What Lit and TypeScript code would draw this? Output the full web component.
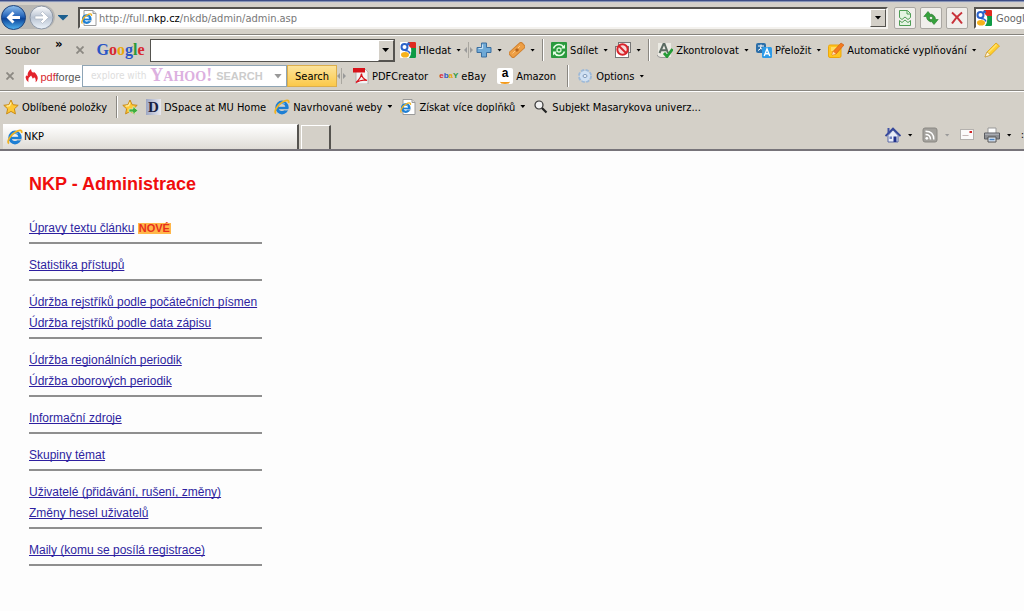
import { LitElement, html, svg, css, TemplateResult } from "lit";
import { customElement, property } from "lit/decorators.js";

const ie = svg`<ellipse cx="8" cy="8.5" rx="5" ry="5.2" fill="none" stroke="#1d7fd4" stroke-width="3.400"/>
  <path d="M4 9h10" stroke="#1d7fd4" stroke-width="2.4"/><path d="M10.5 10.8h5" stroke="#d4d0c8" stroke-width="1.2"/>
  <path d="M4.5 6.500C6 4 9 3.500 11 5" fill="none" stroke="#7cc4f5" stroke-width="1"/>
  <path d="M2 14.500C-.5 13 3 6 8.500 3 12 .8 15.500.500 14.500 4" fill="none" stroke="#f0b323" stroke-width="1.800"/>`;

const googleG = svg`<rect x="0" y="0" width="16" height="16" rx="1" fill="#fff"/>
  <path d="M8 0h7q1 0 1 1v5H11Q8 4 8 0z" fill="#e02b20"/><path d="M11 6h5v9q0 1-1 1H9q3-4 2-10z" fill="#0f9a45"/>
  <circle cx="4.500" cy="5" r="3" fill="#fff" stroke="#2b62c9" stroke-width="2"/><circle cx="8.500" cy="1.800" r="1.500" fill="#2b62c9"/>
  <ellipse cx="5" cy="12.700" rx="4" ry="2.800" fill="#f6b21b"/><path d="M5 8.500q4 0 5 3" stroke="#2b62c9" stroke-width="1.500" fill="none"/>`;

const star = svg`<path d="M8 1l2.100 4.700 5.100.6-3.800 3.500 1 5.100L8 12.400l-4.400 2.500 1-5.100L.8 6.300l5.100-.6z" fill="#ffc935" stroke="#c98a16" stroke-width="1"/>
  <path d="M8 3.500L6.600 6.700l-3 .4" fill="none" stroke="#fff0a8" stroke-width="1.200"/>`;

const icons: Record<string, TemplateResult> = {
  ie,
  iePage: svg`<path d="M3 .5h9l3 3v12H3z" fill="#fff" stroke="#9a9a9a"/><path d="M12 .5v3h3" fill="#ddd" stroke="#9a9a9a"/>
    <g transform="translate(0 3) scale(.72)">${ie}</g>`,
  googleG,
  star,
  starAdd: svg`${star}<path d="M7 10h4V7.500l5 4-5 4V13H7z" fill="#3fae3c" stroke="#d9f2cf" stroke-width=".7"/>`,
  plus: svg`<path d="M5.500 1h5v4.500H15v5h-4.500V15h-5v-4.500H1v-5h4.500z" fill="#6fa9d6" stroke="#3c6f9f"/><path d="M6.500 6.500v-4M2.500 6.500h4" stroke="#c5e2f7" stroke-width="1.200"/>`,
  patch: svg`<rect x="-.5" y="4.500" width="17" height="7" rx="2" transform="rotate(-42 8 8)" fill="#ee9f45" stroke="#cf8030"/>
    <path d="M3.500 11.500L11 4" stroke="#f9c98a"/><rect x="6.500" y="6.500" width="3" height="3" transform="rotate(-42 8 8)" fill="#b5651d"/>`,
  share: svg`<rect width="16" height="16" rx="1" fill="#2a9a3e"/><path d="M2.500 6.500q1.500-4 5.500-4 3 0 4.500 2.500M13.500 9.500q-1.500 4-5.500 4-3 0-4.500-2.500" fill="none" stroke="#e6ffe6" stroke-width="1.600"/>
    <path d="M14 2.500v4h-4zM2 13.500v-4h4z" fill="#e6ffe6"/><circle cx="8" cy="8" r="2" fill="none" stroke="#d5f7d5" stroke-width="1.300"/>`,
  block: svg`<rect x="3.500" y=".5" width="12" height="10" fill="#eee" stroke="#777"/><rect x=".5" y="4.500" width="13" height="11" fill="#fff" stroke="#777"/>
    <circle cx="7.500" cy="7.500" r="5.200" fill="#f7dada" stroke="#d8232a" stroke-width="2"/><path d="M4 4l7 7" stroke="#d8232a" stroke-width="2"/>`,
  check: svg`<path d="M1 1h13v14H3q-2 0-2-2z" fill="#ecebe4"/><path d="M0 13q1 2.500 4 2.500h7" stroke="#999" fill="none"/><path d="M2.500 11L6.500 2h1l3.500 9M4 8.200h5.500" fill="none" stroke="#5b6b62" stroke-width="2"/><path d="M7 11l3 3.500L15.500 7" fill="none" stroke="#249b36" stroke-width="2.800"/>`,
  translate: svg`<rect x="0" y="1" width="10" height="10" rx="2" fill="#2c6ea8"/><path d="M2 4h6M5 2.500v2q0 3-3 4M4 5.500L8 9" stroke="#fff" fill="none"/>
    <rect x="6" y="5" width="10" height="11" rx="1.500" fill="#2d9be8"/><path d="M8.200 14L11 7l2.800 7M9 11.800h4" fill="none" stroke="#fff" stroke-width="1.400"/>`,
  autofill: svg`<rect x=".5" y="3" width="12.500" height="12.500" rx="1.500" fill="#ffc51f" stroke="#eda60b"/><path d="M3 6h6M3 8h4" stroke="#fff1a8"/><path d="M4 13l1-3.500L13 1l3 2-8 9z" fill="#f47b20" stroke="#c9570e" stroke-width=".6"/><path d="M4 13l1-3.500L8 12z" fill="#ffe1b0"/>`,
  pencil: svg`<path d="M1 15l2-5 9-9 3.500 3L6.500 13z" fill="#ffcf2d" stroke="#dea112" stroke-width=".8"/><path d="M4 11l8.500-8.500" stroke="#ffe270" stroke-width="1.200"/><path d="M1 15l2-5 3.500 3z" fill="#fff3d6" stroke="#b98b2a" stroke-width=".5"/>`,
  flame: svg`<path d="M4 15Q-1 11 1.500 7 2 8 3 8 2.500 3 7 0q-.5 3 2.500 4.500L10 3q5 4 4.500 8Q14 14 12 15q1-4-1.500-5.500L9 11 7 7.500Q3 10 4 15z" fill="#e3222b"/>`,
  pdf: svg`<path d="M3 1h9l3 3v12H3z" fill="#f4f4f4" stroke="#a8a8a8" stroke-width=".8"/><rect x="0" y="0" width="12" height="4.500" fill="#d8131b"/>
    <path d="M3 14.500Q8 10 8.500 5.500 8.500 10 14 12.500 9 11 3 14.500z" fill="none" stroke="#d8131b" stroke-width="1.300"/>`,
  gear: svg`<circle cx="8" cy="8" r="5.500" fill="#b7cfe8" stroke="#9db9d8" stroke-width="3" stroke-dasharray="3 1.300"/><circle cx="8" cy="8" r="5.200" fill="#cfe0f3"/><ellipse cx="8" cy="8" rx="2" ry="1.500" fill="#f4f8fc" stroke="#7d97b8"/>`,
  magnifier: svg`<circle cx="6" cy="6" r="4" fill="#f0f0f0" stroke="#333" stroke-width="1.200"/><path d="M9 9l4.500 4.500" stroke="#222" stroke-width="2.200"/>`,
  home: svg`<path d="M3 8.500V15h10V8.500L8 3z" fill="#e9edf8" stroke="#5c6ba5"/><path d="M.5 9L8 1.500 15.500 9" fill="none" stroke="#35479b" stroke-width="1.800"/><path d="M2.500 1h2v4l-2 2z" fill="#4152a5"/><rect x="8.500" y="9.500" width="3" height="5.500" fill="#22328c"/><rect x="4.500" y="9.500" width="2.500" height="2.500" fill="#6f80c0"/>`,
  rss: svg`<rect x="1" y="1" width="14" height="14" rx="2" fill="#a3a19c" stroke="#8a8883"/><circle cx="4.800" cy="11.300" r="1.400" fill="#fff"/><path d="M3.500 7.500q5 0 5 5M3.500 4.200q8.300 0 8.300 8.300" fill="none" stroke="#fff" stroke-width="1.500"/>`,
  mail: svg`<rect x="1.500" y="2.500" width="13" height="10" fill="#fbfafa" stroke="#b4b1ae"/><rect x="10.500" y="4" width="2.500" height="2" fill="#d02525"/><path d="M3.500 8.500h6" stroke="#c5b7b7"/>`,
  printer: svg`<path d="M4 1h8v6H4z" fill="#fff" stroke="#999"/><path d="M.5 6h15v6H.5z" fill="#8c8e92" stroke="#5b5d62"/><path d="M1 7.200h14" stroke="#b9bcc2"/><path d="M4 10h8v5H4z" fill="#dfe8f3" stroke="#555"/><path d="M5.500 12.500h5" stroke="#4a85c4" stroke-width="1.500"/>`,
  broken: svg`<path d="M2.500 7.500v-7h8l3 3v4l-2.500 2L8 7 5 9.500zM2.500 10.500l2.500 2 3-2.500 3 2.500 2.500-2v5h-11z" fill="#e4f4e2" stroke="#4f9e55"/><path d="M10 .5v3.500h3.500" fill="none" stroke="#4f9e55"/>`,
  refresh: svg`<path d="M5 1.500L.8 6.500h2.700q0 4 4.500 5.500-2-2.500-1.500-5.500h2.700z" fill="#35a23b" stroke="#23782a" stroke-width=".6"/><path d="M11 14.500l4.200-5h-2.700q0-4-4.500-5.500 2 2.500 1.500 5.500H6.800z" fill="#35a23b" stroke="#23782a" stroke-width=".6"/>`,
  stop: svg`<path d="M3 2.500q5 4 10 11M13 2.500Q7 7 3 13.500" fill="none" stroke="#c8323a" stroke-width="2"/>`,
};

const icon = (name: string) => html`<svg class="icon" viewBox="0 0 16 16" aria-hidden="true">${icons[name]}</svg>`;
const arrow = (cls = "") => html`<span class="arrow ${cls}"></span>`;
const close = html`<svg class="close" viewBox="0 0 8 8" aria-hidden="true"><path d="M.5.500l7 7M7.500.500l-7 7" stroke="#8b8882" stroke-width="1.800"/></svg>`;
const grip = html`<svg class="grip" viewBox="0 0 9 16" aria-hidden="true"><path d="M3 5v6L0 8zM6 5v6l3-3z" fill="#999"/><path d="M4.500 0v16" stroke="#aaa7a0"/></svg>`;

const shared = css`
  * { box-sizing: border-box; }
  button, input { font: inherit; color: inherit; margin: 0; padding: 0; border: 0; background: none; border-radius: 0; outline: none; }
  .icon { width: 16px; height: 16px; flex: none; display: block; }
  .arrow { flex: none; width: 5px; height: 3px; background: #000; clip-path: polygon(0 0, 100% 0, 50% 100%); }
  .arrow.dim { background: #999; }
`;

@customElement("tool-button")
class ToolButton extends LitElement {
  @property() icon = "";
  @property() label = "";
  @property() name = "";
  @property({ type: Boolean }) menu = false;
  @property({ type: Boolean }) dim = false;
  static styles = [shared, css`
    :host { display: block; flex: none; }
    button { display: flex; align-items: center; gap: 3px; height: 16px; white-space: nowrap; }
    .label { padding-top: 2px; }
    .arrow { margin-left: 2px; }
    :host([wide]) .arrow { margin-left: 4px; }
  `];
  render() {
    return html`<button aria-label=${this.label || this.name}>
      ${this.icon ? icon(this.icon) : html`<slot></slot>`}${this.label ? html`<span class="label">${this.label}</span>` : ""}
      ${this.menu ? arrow(this.dim ? "dim" : "") : ""}
    </button>`;
  }
}

const groups = [
  [{ text: "Úpravy textu článku", isNew: true }],
  [{ text: "Statistika přístupů" }],
  [{ text: "Údržba rejstříků podle počátečních písmen" }, { text: "Údržba rejstříků podle data zápisu" }],
  [{ text: "Údržba regionálních periodik" }, { text: "Údržba oborových periodik" }],
  [{ text: "Informační zdroje" }],
  [{ text: "Skupiny témat" }],
  [{ text: "Uživatelé (přidávání, rušení, změny)" }, { text: "Změny hesel uživatelů" }],
  [{ text: "Maily (komu se posílá registrace)" }],
] as { text: string; isNew?: boolean }[][];

@customElement("app-root")
class AppRoot extends LitElement {
  static styles = [shared, css`
    :host { display: flex; flex-direction: column; min-height: 100vh; background: #fdfdfd; overflow: hidden; }
    .chrome { background: #d4d0c8; border-bottom: 2px solid #77747a; font: 11px/14px "DejaVu Sans Condensed", "Noto Sans", sans-serif; color: #000; }
    .title { height: 3px; background: linear-gradient(#3c4c86 0 1px, #8795b5 1px 2px, #d0ccce 2px); }
    .row { display: flex; align-items: center; white-space: nowrap; overflow: hidden; }
    .sep { flex: none; width: 2px; height: 22px; border-left: 1px solid #8a8781; border-right: 1px solid #fff; }

    .nav { height: 32px; border-bottom: 1px solid #85827c; padding: 0 0 2px 1px; }
    .orbs { display: flex; flex: none; width: 54px; height: 27px; align-items: center; }
    .orbs svg { width: 54px; height: 27px; }
    .drop { width: 10px; height: 6px; margin: 0 10px 0 3px; background: #1d5f8f; clip-path: polygon(0 0, 100% 0, 100% 20%, 50% 100%, 0 20%); }
    .address { flex: 1; display: flex; align-items: center; gap: 2px; height: 22px; padding-left: 1px; background: #fff; border: 2px solid; border-color: #55534f #f4f2ee #f4f2ee #55534f; color: #777; }
    .address b { font-weight: normal; color: #000; }
    .address .url { flex: 1; padding-top: 2px; }
    .combo { flex: none; width: 16px; height: 100%; display: flex; align-items: center; justify-content: center; background: #d4d0c8; border: 1px solid; border-color: #fff #55534f #55534f #fff; }
    .combo .arrow { width: 7px; height: 4px; }
    .navbtns { display: flex; gap: 4px; margin: 0 6px; }
    .navbtn { display: flex; align-items: center; justify-content: center; width: 22px; height: 22px; background: #f1efec; border: 1px solid #aaa7a2; border-radius: 2px; }
    .find { flex: none; display: flex; align-items: center; gap: 4px; width: 50px; height: 22px; background: #fff; border: 2px solid; border-color: #55534f #fff #fff #55534f; border-right: 0; }
    .find input { width: 100px; color: #555; padding-top: 2px; }
    .find input::placeholder { color: #666; opacity: 1; }

    .google { height: 29px; border-top: 1px solid #fff; padding-left: 5px; gap: 7px; }
    .google > button { padding-top: 2px; }
    .more { margin: 0 6px 12px 8px; font-weight: bold; font-size: 13px; }
    .close { flex: none; width: 8px; height: 8px; }
    .logo { font: bold 16px/22px "Liberation Serif", serif; margin: 0 -2px 0 6px; }
    .b { color: #2a56c6; } .r { color: #d8292f; } .y { color: #e9a90d; } .g { color: #2a9a3b; }
    .query { flex: none; display: flex; width: 245px; height: 23px; background: #fff; border: 1px solid #55534f; margin-right: -2px; }
    .query input { flex: 1; min-width: 0; }
    .grip { flex: none; width: 9px; height: 16px; }
    .google .grip { height: 22px; margin: 0 -4px; }

    .pdfforge { height: 27px; border-bottom: 1px solid #8a8781; padding: 0 0 2px 6px; }
    .brand { display: flex; align-items: center; justify-content: center; gap: 1px; width: 58px; height: 22px; margin-left: 10px; background: #fff; font: 11px/14px "Liberation Sans", sans-serif; color: #555; }
    .brand .icon { width: 14px; }
    .brand span { padding-top: 2px; }
    .brand i { font-style: normal; color: #d8292f; }
    .yahoo { display: flex; align-items: center; gap: 4px; width: 205px; height: 22px; padding: 0 4px 0 8px; background: #fff; border: 1px solid #8fa5b5; color: #ddd; font-size: 10px; }
    .yahoo b { font: bold 18px/20px "Liberation Serif", serif; color: #dcb0e0; }
    .yahoo b small { font-size: 14px; }
    .yahoo strong { font: bold 11px/14px "Liberation Sans", sans-serif; color: #ccc; flex: 1; }
    .yahoo .arrow { width: 8px; height: 5px; }
    .search { width: 50px; height: 22px; padding-top: 2px; background: linear-gradient(#fde39a, #fbc94a); border: 1px solid #dcae4c; }
    .apps { display: flex; align-items: center; gap: 11px; margin-left: 7px; }
    .apps .sep { margin-right: -3px; }
    .tag { display: block; font: bold 8px/16px "Liberation Sans", sans-serif; }
    .amz { display: flex; flex-direction: column; align-items: center; width: 16px; height: 16px; background: #fff; font-size: 12px; line-height: 11px; border-radius: 2px; }
    .amz::after { content: ""; width: 10px; height: 3px; border-bottom: 2px solid #f49a1a; border-radius: 0 0 50% 50%; }

    .fav { height: 30px; border-top: 1px solid #fff; padding-left: 3px; gap: 8px; }
    .fav .sep { margin: 0 -4px 0 1px; }
    .dspace { display: block; width: 15px; height: 16px; background: linear-gradient(90deg, #9ca6c4, #e8e8ee); font: bold 15px/16px "Liberation Serif", serif; color: #1a2040; text-align: center; }

    .tabs { height: 28px; padding-left: 3px; align-items: flex-end; }
    .tab { display: flex; align-items: center; gap: 1px; flex: 0 1 296px; height: 25px; padding-left: 4px; background: linear-gradient(#fff, #dfdcd6); border-right: 2px solid #55534f; border-top: 1px solid #fff; }
    .newtab { width: 30px; height: 24px; margin-left: 2px; border: 1px solid #fff; border-right: 2px solid #55534f; border-bottom: 0; }
    .cmds { display: flex; align-items: center; gap: 9px; height: 28px; margin-left: auto; }

    .page { flex: 1; padding: 23px 29px; font: 12px/21px "Liberation Sans", Arial, sans-serif; color: #000; }
    h1 { margin: 0 0 23px; font-size: 18px; line-height: 21px; color: #f00d0d; }
    ul { list-style: none; margin: 0; padding: 0; width: 233px; }
    .group { border-bottom: 2px solid #8f8f8f; padding-bottom: 3px; margin-bottom: 11px; white-space: nowrap; }
    .group a { color: #2e1fa0; text-decoration: underline; text-decoration-skip-ink: none; }
    .new { display: inline-block; padding: 0 1px; background: #ffb74a; color: #e8301c; font: bold 11px/11px "Liberation Sans", sans-serif; }
  `];

  render() {
    return html`
      <header class="chrome">
        <div class="title"></div>
        <div class="row nav">
          <div class="orbs"><svg viewBox="0 0 54 27" aria-hidden="true">
            <defs><linearGradient id="blue" x2="0" y2="1"><stop offset="0" stop-color="#8fc1ee"/><stop offset=".45" stop-color="#2866bb"/><stop offset=".55" stop-color="#0c4499"/><stop offset="1" stop-color="#4fb4f2"/></linearGradient>
            <linearGradient id="pale" x2="0" y2="1"><stop offset="0" stop-color="#fff"/><stop offset=".5" stop-color="#b9c3d2"/><stop offset="1" stop-color="#edf4fb"/></linearGradient></defs>
            <rect x="0" y="1" width="54" height="24" rx="12" fill="#b9b7b3"/>
            <circle cx="12.500" cy="13.500" r="12" fill="url(#blue)" stroke="#20447c"/><path d="M5.500 13.500l6-6 2 2-2.500 2.500H19v3h-8l2.500 2.500-2 2z" fill="#fff"/>
            <circle cx="40.500" cy="13.500" r="11.500" fill="url(#pale)" stroke="#8b95a4"/><path d="M47.500 13.500l-6-6-2 2 2.500 2.500h-8v3h8l-2.500 2.500 2 2z" fill="#fff" stroke="#a5afbd" stroke-width=".6"/>
          </svg></div>
          <button class="drop" aria-label="Historie"></button>
          <div class="address">${icon("iePage")}<span class="url">http://full.<b>nkp.cz</b>/nkdb/admin/admin.asp</span><button class="combo" aria-label="Adresy">${arrow()}</button></div>
          <div class="navbtns">
            <button class="navbtn" aria-label="Kompatibilita">${icon("broken")}</button>
            <button class="navbtn" aria-label="Aktualizovat">${icon("refresh")}</button>
            <button class="navbtn" aria-label="Zastavit">${icon("stop")}</button>
          </div>
          <div class="find">${icon("googleG")}<input aria-label="Google" placeholder="Google"></div>
        </div>
        <div class="row google">
          <button>Soubor</button><span class="more">»</span>${close}
          <span class="logo"><span class="b">G</span><span class="r">o</span><span class="y">o</span><span class="b">g</span><span class="g">l</span><span class="r">e</span></span>
          <div class="query"><input aria-label="Hledat"><button class="combo" aria-label="Historie hledání">${arrow()}</button></div>
          <tool-button icon="googleG" label="Hledat" menu></tool-button>${grip}
          <tool-button icon="plus" name="Přidat" menu></tool-button>
          <tool-button icon="patch" name="Nástroje" menu></tool-button><span class="sep"></span>
          <tool-button icon="share" label="Sdílet" menu></tool-button>
          <tool-button icon="block" name="Blokování" menu></tool-button><span class="sep"></span>
          <tool-button icon="check" label="Zkontrolovat" menu></tool-button>
          <tool-button icon="translate" label="Přeložit" menu></tool-button>
          <tool-button icon="autofill" label="Automatické vyplňování" menu></tool-button>
          <tool-button icon="pencil" name="Zvýraznit"></tool-button>
        </div>
        <div class="row pdfforge">
          ${close}
          <div class="brand">${icon("flame")}<span><i>pdf</i>forge</span></div>
          <div class="yahoo"><span>explore with</span><b>Y<small>AHOO</small>!</b><strong>SEARCH</strong>${arrow("dim")}</div>
          <button class="search">Search</button>
          ${grip}
          <div class="apps">
            <tool-button icon="pdf" label="PDFCreator"></tool-button>
            <tool-button label="eBay"><span class="tag"><span class="r">e</span><span class="b">b</span><span class="y">a</span><span class="g">Y</span></span></tool-button>
            <tool-button label="Amazon"><span class="tag amz">a</span></tool-button>
            <span class="sep"></span>
            <tool-button icon="gear" label="Options" menu></tool-button>
          </div>
        </div>
        <nav class="row fav">
          <tool-button icon="star" label="Oblíbené položky"></tool-button><span class="sep"></span>
          <tool-button icon="starAdd" name="Přidat k oblíbeným"></tool-button>
          <tool-button label="DSpace at MU Home"><span class="dspace">D</span></tool-button>
          <tool-button icon="ie" label="Navrhované weby" menu></tool-button>
          <tool-button icon="iePage" label="Získat více doplňků" menu></tool-button>
          <tool-button icon="magnifier" label="Subjekt Masarykova univerz..."></tool-button>
        </nav>
        <div class="row tabs">
          <button class="tab">${icon("ie")}<span>NKP</span></button>
          <button class="newtab" aria-label="Nová karta"></button>
          <div class="cmds">
            <tool-button icon="home" name="Domů" menu wide></tool-button>
            <tool-button icon="rss" name="Kanály" menu dim wide></tool-button>
            <tool-button icon="mail" name="Pošta"></tool-button>
            <tool-button icon="printer" name="Tisk" menu wide></tool-button>
            <span>:</span>
          </div>
        </div>
      </header>
      <main class="page">
        <h1>NKP - Administrace</h1>
        <ul>${groups.map(g => html`<li class="group">${g.map(l => html`<div><a href="#">${l.text}</a>${l.isNew ? html` <span class="new">NOVÉ</span>` : ""}</div>`)}</li>`)}</ul>
      </main>`;
  }
}
